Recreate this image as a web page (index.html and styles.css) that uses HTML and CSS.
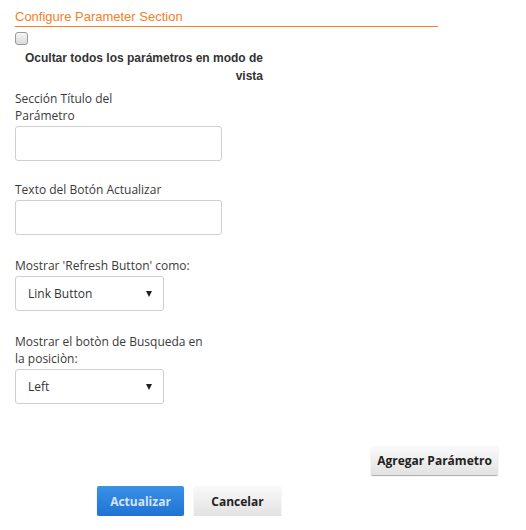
FILE: index.html
```html
<!DOCTYPE html>
<html lang="es">
  <head>
    <meta charset="utf-8">
    <title>Configure Parameter Section</title>
    <meta name="viewport" content="width=device-width, initial-scale=1">
    <link rel="stylesheet" href="styles.css">
  </head>
  <body>
    <form class="config">
      <div class="config-title">Configure Parameter Section</div>
      <input type="checkbox" class="hide-check" id="hideAll">
      <label class="hide-label" for="hideAll">Ocultar todos los parámetros en modo de vista</label>

      <div class="field field-first">
        <label class="field-label field-label-narrow" for="sectionTitle">Sección Título del Parámetro</label>
        <input type="text" class="text-input" id="sectionTitle">
      </div>

      <div class="field">
        <label class="field-label" for="refreshText">Texto del Botón Actualizar</label>
        <input type="text" class="text-input" id="refreshText">
      </div>

      <div class="field field-select">
        <label class="field-label" for="refreshAs">Mostrar 'Refresh Button' como:</label>
        <span class="select-wrap">
          <select class="select-input" id="refreshAs">
            <option>Link Button</option>
            <option>Button</option>
          </select>
        </span>
      </div>

      <div class="field field-select">
        <label class="field-label" for="searchPos">Mostrar el botòn de Busqueda en la posiciòn:</label>
        <span class="select-wrap">
          <select class="select-input" id="searchPos">
            <option>Left</option>
            <option>Right</option>
          </select>
        </span>
      </div>

      <div class="add-row">
        <button type="button" class="btn btn-add">Agregar Parámetro</button>
      </div>

      <div class="actions">
        <button type="button" class="btn btn-primary">Actualizar</button>
        <button type="button" class="btn">Cancelar</button>
      </div>
    </form>
  </body>
</html>
```

FILE: styles.css
```css
body {
  margin: 0;
  background-color: #fff;
  color: #333;
  font-family: "Open Sans", "Liberation Sans", sans-serif;
}
.config {
  display: flex;
  flex-direction: column;
  align-items: flex-start;
  padding: 9px 28px 0 15px;
}
.config-title {
  width: 423px;
  font-family: "Liberation Sans", Arial, sans-serif;
  font-size: 13px;
  line-height: 15px;
  color: #f58025;
  padding-bottom: 2px;
  border-bottom: 1px solid #f58025;
}
.hide-check {
  appearance: none;
  -webkit-appearance: none;
  width: 13px;
  height: 13px;
  margin: 5px 0 0 0;
  border: 1px solid #9a9a9a;
  border-radius: 3px;
  background: linear-gradient(#f6f6f6, #d9d9d9);
}
.hide-label {
  width: 250px;
  margin: 4px 0 0 -2px;
  font-family: "Liberation Sans", Arial, sans-serif;
  font-weight: bold;
  font-size: 12px;
  line-height: 18px;
  text-align: right;
  color: #333;
}
.field {
  display: flex;
  flex-direction: column;
  margin-top: 20px;
}
.field-first {
  margin-top: 5px;
}
.field-select {
  margin-top: 22px;
}
.field-label {
  width: 200px;
  font-size: 12px;
  line-height: 17px;
  color: #3a3a3a;
  margin-bottom: 2px;
}
.field-label-narrow {
  width: 130px;
}
.text-input {
  box-sizing: border-box;
  width: 207px;
  height: 35px;
  margin: 0;
  border: 1px solid #cfcfcf;
  border-radius: 3px;
  background-color: #fff;
}
.select-wrap {
  position: relative;
  display: block;
  width: 149px;
}
.select-wrap::after {
  content: "";
  position: absolute;
  right: 12px;
  top: 15px;
  border-left: 3.5px solid transparent;
  border-right: 3.5px solid transparent;
  border-top: 6px solid #222;
  pointer-events: none;
}
.select-input {
  appearance: none;
  -webkit-appearance: none;
  box-sizing: border-box;
  width: 149px;
  height: 35px;
  margin: 0;
  padding: 0 0 0 12px;
  border: 1px solid #cfcfcf;
  border-radius: 3px;
  background-color: #fff;
  font-family: "Open Sans", "Liberation Sans", sans-serif;
  font-size: 12px;
  color: #333;
}
.add-row {
  align-self: stretch;
  display: flex;
  justify-content: flex-end;
  margin-top: 42px;
}
.btn {
  box-sizing: border-box;
  height: 30px;
  padding: 0;
  border: none;
  border-radius: 2px;
  background: linear-gradient(#fafafa, #e2e2e2);
  box-shadow: 0 1px 1px rgba(0, 0, 0, 0.35);
  font-family: "Open Sans", "Liberation Sans", sans-serif;
  font-weight: bold;
  font-size: 12px;
  color: #222;
  width: 87px;
}
.btn-add {
  width: 127px;
  height: 29px;
}
.btn-primary {
  background: linear-gradient(#3a92e6, #1f72d4);
  color: #d6e3f1;
}
.actions {
  display: flex;
  gap: 10px;
  margin: 11px 0 0 82px;
}
```
